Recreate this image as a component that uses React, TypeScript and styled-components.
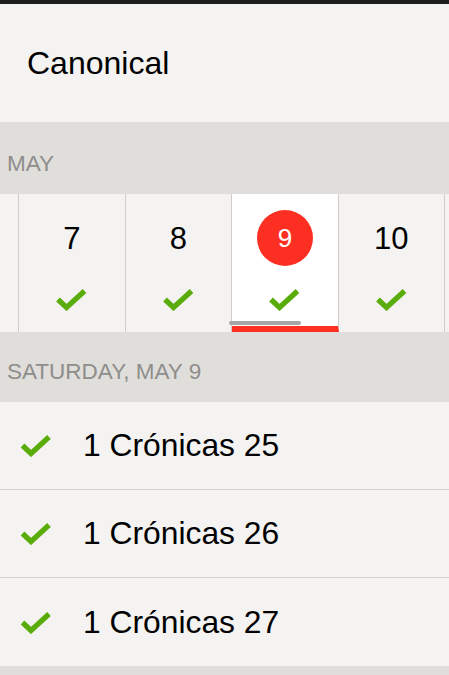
import React from "react";
import styled, { createGlobalStyle } from "styled-components";

const Global = createGlobalStyle`
  html, body { margin: 0; padding: 0; background: #dfdedb; }
  body { font-family: "Liberation Sans", Arial, sans-serif; -webkit-font-smoothing: antialiased; }
  * { box-sizing: border-box; }
`;

const Page = styled.div`
  width: 449px;
  min-height: 675px;
  background: #dfdedb;
  overflow: hidden;
`;

const StatusStrip = styled.div`
  height: 4px;
  background: #1d1d1d;
`;

const Header = styled.header`
  height: 118px;
  background: #f4f3f1;
  display: flex;
  align-items: center;
  padding-left: 27px;
  font-size: 32px;
  color: #000;
`;

const SectionHeader = styled.div<{ $h: number }>`
  height: ${(p) => p.$h}px;
  background: #dfdedb;
  display: flex;
  align-items: flex-end;
  padding: 0 0 19px 7px;
  font-size: 22.5px;
  line-height: 22px;
  color: #8f8d8a;
`;

const Strip = styled.div`
  position: relative;
  height: 138px;
  background: #f4f3f1;
  overflow: hidden;
`;

const Days = styled.div`
  display: flex;
  margin-left: -87.4px;
  height: 100%;
`;

const DayCell = styled.div<{ $selected?: boolean }>`
  flex: 0 0 106.5px;
  height: 100%;
  border-right: 1px solid #cfcecc;
  background: ${(p) => (p.$selected ? "#ffffff" : "#f4f3f1")};
  border-bottom: ${(p) => (p.$selected ? "6px solid #fd2f22" : "0")};
  display: flex;
  flex-direction: column;
  align-items: center;
`;

const DayNumber = styled.div<{ $selected?: boolean }>`
  margin-top: 16px;
  width: 56px;
  height: 56px;
  border-radius: 50%;
  display: flex;
  align-items: center;
  justify-content: center;
  background: ${(p) => (p.$selected ? "#fd2f22" : "transparent")};
  color: ${(p) => (p.$selected ? "#ffffff" : "#000000")};
  font-size: ${(p) => (p.$selected ? "26px" : "31px")};
  line-height: 1;
`;

const DayCheck = styled.div`
  margin-top: 22px;
  width: 31px;
  height: 23px;
  display: flex;
`;

const ScrollIndicator = styled.div`
  position: absolute;
  left: 229px;
  top: 127px;
  width: 72px;
  height: 4px;
  border-radius: 2px;
  background: #a6a6a6;
`;

const List = styled.div`
  background: #f4f3f1;
`;

const Row = styled.div`
  height: 88px;
  display: flex;
  align-items: center;
  border-bottom: 1px solid #d3d2d0;
  padding-left: 20px;
  gap: 31px;
  font-size: 31.8px;
  color: #000;
  &:last-child { border-bottom: 0; }
`;

const RowCheck = styled.div`
  width: 32px;
  height: 23px;
  display: flex;
`;

const Check = () => (
  <svg width="100%" height="100%" viewBox="0 0 31 23">
    <polyline
      points="2,11.5 10.5,19.5 28.5,3"
      fill="none"
      stroke="#5aac0a"
      strokeWidth="5.3"
      strokeLinecap="butt"
      strokeLinejoin="miter"
    />
  </svg>
);

const days: { n?: number; selected?: boolean }[] = [
  {},
  { n: 7 },
  { n: 8 },
  { n: 9, selected: true },
  { n: 10 },
  {},
];

const readings = ["1 Crónicas 25", "1 Crónicas 26", "1 Crónicas 27"];

export default function App() {
  return (
    <Page>
      <Global />
      <StatusStrip />
      <Header>Canonical</Header>
      <SectionHeader $h={72}>MAY</SectionHeader>
      <Strip>
        <Days>
          {days.map((d, i) => (
            <DayCell key={i} $selected={d.selected}>
              {d.n !== undefined && (
                <>
                  <DayNumber $selected={d.selected}>{d.n}</DayNumber>
                  <DayCheck>
                    <Check />
                  </DayCheck>
                </>
              )}
            </DayCell>
          ))}
        </Days>
        <ScrollIndicator />
      </Strip>
      <SectionHeader $h={70}>SATURDAY, MAY 9</SectionHeader>
      <List>
        {readings.map((r) => (
          <Row key={r}>
            <RowCheck>
              <Check />
            </RowCheck>
            <span>{r}</span>
          </Row>
        ))}
      </List>
    </Page>
  );
}
